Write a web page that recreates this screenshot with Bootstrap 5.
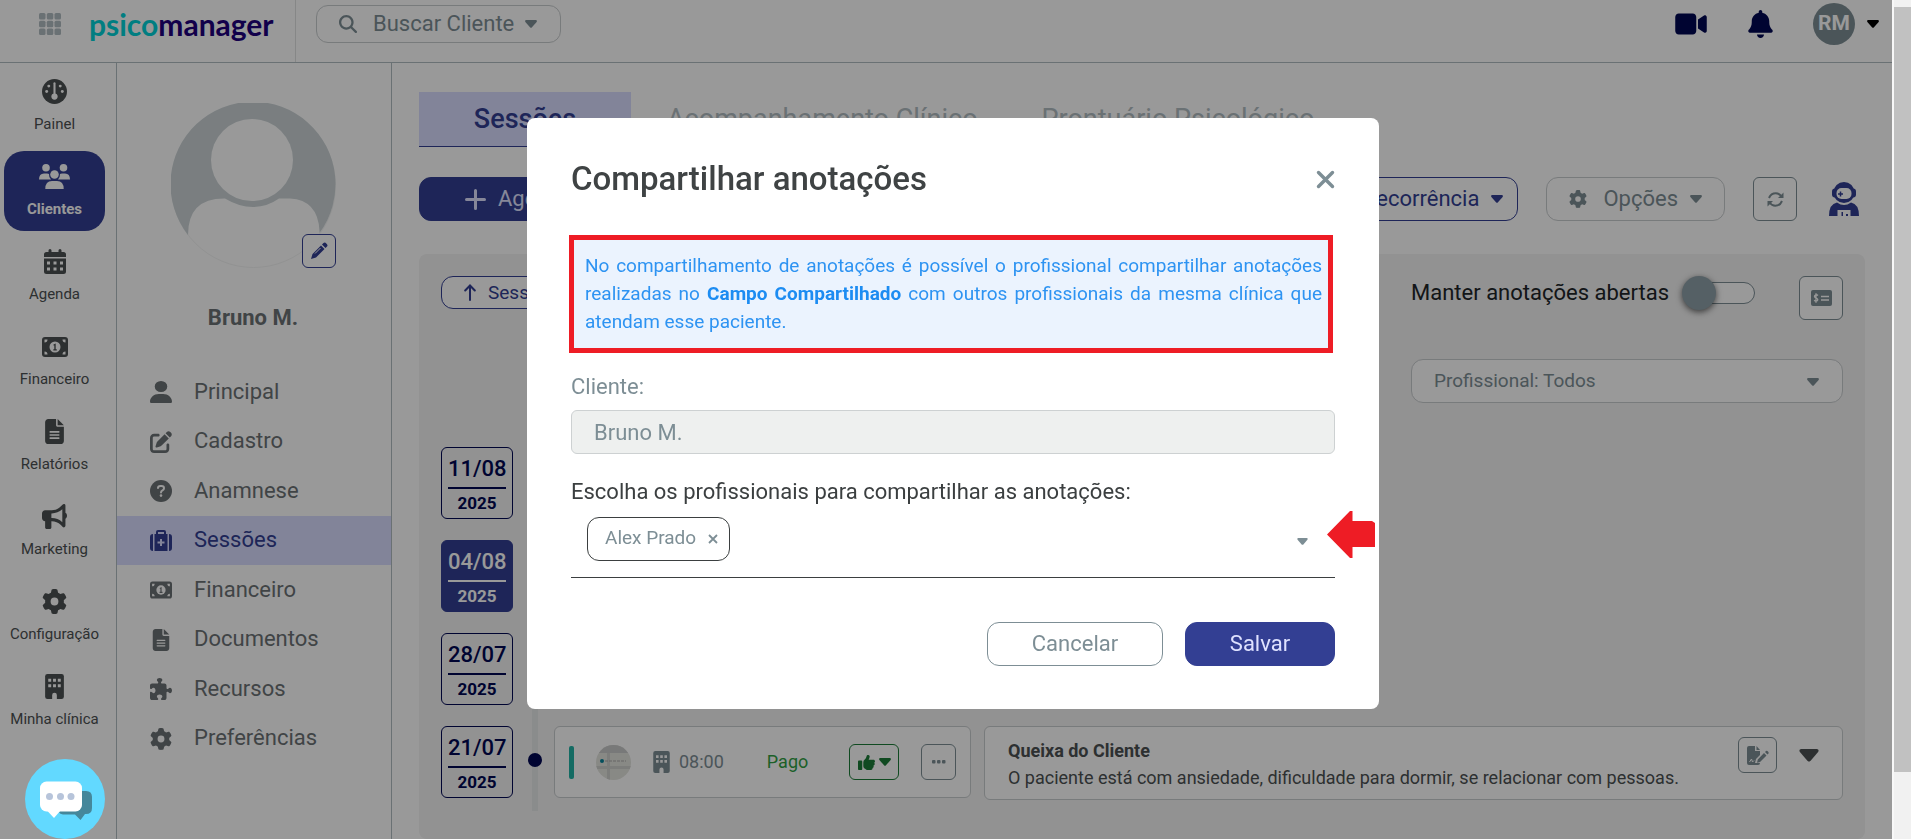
<!DOCTYPE html>
<html lang="pt-BR">
<head>
<meta charset="utf-8">
<meta name="viewport" content="width=device-width, initial-scale=1">
<title>Psicomanager - Sessões</title>
<link href="https://cdn.jsdelivr.net/npm/bootstrap@5.3.0/dist/css/bootstrap.min.css" rel="stylesheet">
<style>
:root{--brand:#333f93;--navy:#000752;--steel:#7d8e95;--slate:#6c7478;--lilac:#d9dcff;--ink:#3b3f40}
body{font-family:Roboto,"Liberation Sans",sans-serif;font-size:22px;line-height:1.2;color:#6c7275;background:#fff}
svg{display:block;fill:currentColor;flex:none}
a{text-decoration:none;color:inherit}
.btn{--bs-btn-font-size:22px;--bs-btn-line-height:26px;--bs-btn-border-radius:12px;--bs-btn-padding-y:8px;--bs-btn-padding-x:22px}
.btn-line{--bs-btn-color:var(--steel);--bs-btn-border-color:var(--steel);background:#fff}
.btn-soft{--bs-btn-color:var(--steel);--bs-btn-border-color:#c9cdcf;background:#fff}
.btn-brand{--bs-btn-color:#dfe2ff;--bs-btn-bg:var(--brand);--bs-btn-border-color:var(--brand)}
.btn-brand-line{--bs-btn-color:var(--brand);--bs-btn-border-color:var(--brand);background:#fff}
.btn-square{--bs-btn-padding-x:0;--bs-btn-padding-y:0;--bs-btn-border-radius:6px;width:44px;height:44px;display:flex;align-items:center;justify-content:center}
.topbar{height:63px;border-bottom:1px solid #b1bcc2;padding-bottom:14px}
.brand-zone{width:296px;height:62px;border-right:1px solid #dfe1e2;padding:0 0 14px 39px;align-self:flex-start}
.wordmark{font:700 30px/36px Lato,sans-serif;color:#1e007d}
.wordmark span{color:#00d2d8}
.search{--bs-btn-padding-y:5px;--bs-btn-line-height:26px;height:38px;margin-left:20px}
.initials{width:42px;height:42px;border-radius:50%;background:#7d8e95;color:#fff;font-size:21px;font-weight:700}
.rail{width:117px;border-right:1px solid #b1bcc2;padding:3px 11px 0 4px;color:#4c5152;font-size:15px;row-gap:5px}
.rail a{height:80px;gap:11px;border-radius:20px;white-space:nowrap}
.rail a.active{background:var(--brand);color:#fff;font-weight:700}
.client{width:275px;border-right:1px solid #b1bcc2;padding-right:2px}
.portrait{width:165px;height:165px;margin-top:40px}
.client-name{margin:37px 0 36px}
.pencil{width:34px;height:34px;right:0;bottom:0}
.client-menu{display:grid;grid-auto-rows:1fr;height:396px;margin-right:-2px}
.client-menu a{padding-left:33px;gap:22px}
.client-menu a.active{background:var(--lilac);color:var(--brand);--cut:#d9dcff}
.workspace{padding:29px 27px 0}
.tabs a{padding:10px 36px 0;height:55px;font-size:27px;line-height:34px;color:#b1bcc2}
.tabs a.active{background:var(--lilac);border-bottom:1px solid var(--brand);color:var(--brand);font-weight:500;width:212px;text-align:center}
.board{background:#f3f3f3;border-radius:8px;padding:22px;margin-top:33px}
.btn-pill{--bs-btn-font-size:19px;--bs-btn-line-height:23px;--bs-btn-padding-y:4px}
.toggle{appearance:none;width:70px;height:22px;border:1px solid var(--steel);border-radius:11px;position:relative;background:#fff}
.toggle::before{content:"";position:absolute;left:-4px;top:-7px;width:34px;height:34px;border-radius:50%;background:#8ea0a8;box-shadow:0 2px 6px rgba(0,0,0,.6)}
.filter{width:432px;height:44px;margin-top:39px}
.filter select{appearance:none;width:100%;height:100%;border:1px solid #c9cdcf;border-radius:12px;background:#fff;color:var(--steel);font-size:19px;padding:0 22px}
.filter svg{right:24px;top:19px}
.date-list{width:72px;gap:21px}
.date-tile{height:72px;border:1px solid var(--navy);border-radius:6px;background:#f3f3f3;color:var(--navy);padding:0 6px;font-weight:500;text-align:center;line-height:28px}
.date-tile b{font-size:17px;display:block;line-height:28px}
.date-tile span{display:block;border-bottom:2px solid;padding:7px 0 4px}
.date-tile.active{background:var(--brand);border-color:var(--brand);color:#fff}
.track-line{width:6px;background:#e6eaea;margin:0 16px 0 19px}
.track-line i{width:14px;height:14px;border-radius:50%;background:var(--navy);left:-4px;bottom:44px}
.entry{border:1px solid #c9cdcf;border-radius:6px;background:#fff;font-size:18px}
.entry-time{width:417px;height:72px;padding:0 14px}
.entry-note{height:74px;color:#4c5152;padding:10px 23px 0}
.entry-note p{line-height:27px}
.entry-mark{width:5px;height:33px;border-radius:2px;background:#22b3a6}
.btn-mini{--bs-btn-padding-x:0;--bs-btn-padding-y:0;--bs-btn-border-radius:6px;height:36px;display:flex;align-items:center;justify-content:center}
.shade{position:fixed;inset:0 19px 0 0;background:rgba(0,0,0,.4);z-index:1040}
.scroll-rail{width:19px;background:#f1f1f1;border-left:2px solid #f8f8f8;padding-top:7px}
.scroll-rail div{height:92%;background:#c1c1c1}
.chat{left:25px;bottom:0;width:80px;height:80px;z-index:1060}
.modal{width:calc(100% - 5px)}
.modal-dialog{max-width:852px;margin:118px auto 0}
.modal-content{border:0;border-radius:8px;padding:42px 44px 43px}
.modal h1{font-size:33px;line-height:38px;font-weight:500;color:#3f4344}
.notice{border:5px solid #ee1c25;background:#ebf3fe;color:#2d93f2;font-size:19px;line-height:28px;text-align:justify;padding:12px 6px 12px 11px;margin:37px 2px 21px -2px}
.notice b{color:#1c8cf2}
.modal .form-control{height:44px;font-size:22px;padding:0 22px;border-radius:6px;border-color:#cdd1d2;background:#eef0ef;color:var(--steel)}
.picker{height:61px;border-bottom:1px solid #3b3f40;padding:0 27px 0 16px}
.chip{height:44px;border:1px solid #3b3f40;border-radius:12px;color:var(--steel);font-size:19px;padding:0 11px 0 17px;gap:12px}
.chip button,.plain{border:0;background:none;padding:0;color:inherit}
.picker input{border:0;outline:0;min-width:0;height:44px}
.pointer{left:800px;top:393px}
</style>
</head>
<body>
<svg width="0" height="0" class="position-absolute" aria-hidden="true">
<defs>
<symbol id="caret" viewBox="0 0 12 8"><path d="M1.200 0H10.800Q12.500.3 11.600 1.900L7 7.300Q6 8.300 5 7.300L.4 1.900Q-.5.3 1.200 0Z"/></symbol>
<symbol id="gear" viewBox="0 0 512 512"><path d="M495.900 166.600c3.200 8.700 .5 18.400-6.400 24.600l-43.300 39.400c1.100 8.300 1.700 16.800 1.700 25.400s-.6 17.100-1.700 25.400l43.300 39.400c6.900 6.200 9.600 15.900 6.400 24.600c-4.400 11.900-9.700 23.300-15.800 34.300l-4.700 8.100c-6.600 11-14 21.400-22.100 31.200c-5.900 7.200-15.700 9.600-24.500 6.800l-55.700-17.700c-13.400 10.300-28.200 18.900-44 25.400l-12.500 57.100c-2 9.100-9 16.300-18.200 17.800c-13.800 2.300-28 3.500-42.500 3.500s-28.700-1.200-42.500-3.500c-9.200-1.500-16.200-8.700-18.200-17.800l-12.500-57.100c-15.800-6.500-30.600-15.100-44-25.400L83.100 425.900c-8.800 2.800-18.600 .3-24.500-6.800c-8.100-9.800-15.500-20.200-22.100-31.200l-4.700-8.100c-6.100-11-11.400-22.400-15.800-34.300c-3.200-8.700-.5-18.400 6.400-24.600l43.300-39.400C64.600 273.100 64 264.600 64 256s.6-17.100 1.700-25.400L22.400 191.200c-6.900-6.200-9.600-15.900-6.400-24.600c4.400-11.900 9.700-23.300 15.800-34.300l4.700-8.100c6.600-11 14-21.400 22.100-31.200c5.900-7.200 15.700-9.600 24.500-6.800l55.700 17.700c13.400-10.300 28.200-18.900 44-25.400l12.500-57.100c2-9.100 9-16.300 18.200-17.800C227.300 1.200 241.500 0 256 0s28.700 1.200 42.500 3.500c9.200 1.500 16.200 8.700 18.200 17.800l12.500 57.100c15.800 6.500 30.600 15.100 44 25.400l55.700-17.700c8.800-2.800 18.600-.3 24.500 6.800c8.100 9.800 15.500 20.200 22.100 31.200l4.700 8.100c6.100 11 11.400 22.400 15.800 34.300zM256 336a80 80 0 1 0 0-160 80 80 0 1 0 0 160z"/></symbol>
<symbol id="money" viewBox="0 0 26 20"><rect width="26" height="20" rx="3"/><g fill="var(--cut,#fff)"><circle cx="13" cy="10" r="5.500"/><path d="M2.500 5.500V2.500H5.500A3 3 0 0 1 2.500 5.500ZM23.500 5.500V2.500H20.500A3 3 0 0 0 23.500 5.500ZM2.500 14.500V17.500H5.500A3 3 0 0 0 2.500 14.500ZM23.500 14.500V17.500H20.500A3 3 0 0 1 23.500 14.500Z"/></g><path d="M11.500 7.600 13.700 6.500V12.200H14.800V13.400H11.300V12.200H12.300V8.400L11.500 8.600Z"/></symbol>
<symbol id="file" viewBox="0 0 384 512"><path d="M64 0C28.700 0 0 28.700 0 64V448c0 35.300 28.700 64 64 64H320c35.300 0 64-28.700 64-64V160H256c-17.700 0-32-14.300-32-32V0H64zM256 0V128H384L256 0z"/><path d="M104 264H280M104 328H280M104 392H280" stroke="var(--cut,#fff)" stroke-width="32" stroke-linecap="round"/></symbol>
<symbol id="building" viewBox="0 0 384 512"><rect width="384" height="512" rx="48"/><path d="M144 512V432a48 48 0 0 1 96 0v80ZM64 96h60v64H64ZM162 96h60v64h-60ZM260 96h60v64h-60ZM64 208h60v64H64ZM162 208h60v64h-60ZM260 208h60v64h-60Z" fill="var(--cut,#fff)"/></symbol>
</defs>
</svg>

<div class="d-flex vh-100 overflow-hidden">
  <div class="flex-grow-1 d-flex flex-column overflow-hidden">
    <header class="topbar d-flex align-items-center flex-shrink-0">
      <div class="brand-zone d-flex align-items-center">
        <button class="plain" aria-label="Aplicativos"><svg width="22" height="22" viewBox="0 0 22 22" color="#b1bcc2"><g id="dots"><rect width="6.500" height="6.500" rx="1.500"/><rect x="7.800" width="6.500" height="6.500" rx="1.500"/><rect x="15.500" width="6.500" height="6.500" rx="1.500"/></g><use href="#dots" y="7.800"/><use href="#dots" y="15.500"/></svg></button>
        <a href="#" class="wordmark ms-4 ps-1"><span>psico</span>manager</a>
      </div>
      <button class="btn btn-soft search d-flex align-items-center">
        <svg width="18" height="18" viewBox="0 0 512 512" class="me-3"><path d="M416 208c0 45.900-14.900 88.300-40 122.700L502.600 457.400c12.500 12.500 12.500 32.800 0 45.300s-32.800 12.500-45.300 0L330.700 376c-34.400 25.200-76.800 40-122.700 40C93.100 416 0 322.900 0 208S93.100 0 208 0S416 93.100 416 208zM208 352a144 144 0 1 0 0-288 144 144 0 1 0 0 288z"/></svg>
        Buscar Cliente <svg width="12" height="8" style="margin:0 1px 0 11px"><use href="#caret"/></svg>
      </button>
      <div class="ms-auto d-flex align-items-center" style="color:var(--navy);margin-right:13px">
        <a href="#" aria-label="Vídeo"><svg width="32" height="28" viewBox="0 0 576 512"><path d="M0 128C0 92.700 28.700 64 64 64H320c35.300 0 64 28.700 64 64V384c0 35.300-28.700 64-64 64H64c-35.300 0-64-28.700-64-64V128zM559.100 99.800c10.400 5.600 16.900 16.400 16.900 28.200V384c0 11.800-6.500 22.600-16.900 28.200s-23 5-32.900-1.600l-96-64L416 337.100V320 192 174.900l14.200-9.500 96-64c9.800-6.500 22.400-7.200 32.900-1.600z"/></svg></a>
        <a href="#" aria-label="Notificações" style="margin:0 40px 0 41px"><svg width="25" height="28" viewBox="0 0 448 512"><path d="M224 0c-17.700 0-32 14.300-32 32V51.200C119 66 64 130.600 64 208v18.800c0 47-17.300 92.400-48.500 127.600l-7.400 8.300c-8.400 9.400-10.400 22.900-5.300 34.400S19.400 416 32 416H416c12.600 0 24-7.400 29.200-18.900s3.100-25-5.300-34.400l-7.400-8.300C401.300 319.200 384 273.900 384 226.800V208c0-77.400-55-142-128-156.800V32c0-17.700-14.300-32-32-32zm45.300 493.300c12-12 18.700-28.300 18.700-45.300H224 160c0 17 6.700 33.300 18.700 45.300s28.300 18.700 45.300 18.700s33.300-6.700 45.300-18.700z"/></svg></a>
        <button class="plain d-flex align-items-center gap-2 text-black"><span class="initials d-flex align-items-center justify-content-center me-1">RM</span><svg width="12" height="8"><use href="#caret"/></svg></button>
      </div>
    </header>

    <div class="d-flex flex-grow-1">
      <nav class="rail d-flex flex-column flex-shrink-0">
        <a href="#" class="d-flex flex-column align-items-center justify-content-center"><svg width="25" height="25" viewBox="0 0 24 24"><circle cx="12" cy="12" r="12"/><g fill="#fff"><circle cx="4.500" cy="12" r="1.400"/><circle cx="6.500" cy="6.800" r="1.400"/><circle cx="17.500" cy="6.800" r="1.400"/><circle cx="19.500" cy="12" r="1.400"/><circle cx="12" cy="16.800" r="3"/><rect x="11" y="3" width="2" height="13" rx="1"/></g></svg>Painel</a>
        <a href="#" class="active d-flex flex-column align-items-center justify-content-center"><svg width="31" height="25" viewBox="0 0 31 25"><circle cx="7" cy="3.800" r="3.800"/><circle cx="24.500" cy="3.800" r="3.800"/><circle cx="15.500" cy="10.500" r="4.300"/><path d="M0 15.500Q0 9.500 5 9.500H8Q9.500 9.500 10 10 9.800 13.500 12 15.500ZM31 15.500Q31 9.500 26 9.500H23Q21.500 9.500 21 10 21.200 13.500 19 15.500ZM6.300 25Q6.300 17 13 17H18Q24.700 17 24.700 25Z"/></svg>Clientes</a>
        <a href="#" class="d-flex flex-column align-items-center justify-content-center"><svg width="22" height="25" viewBox="0 0 22 25"><path d="M0 8V5.500Q0 3 2.500 3H4.500V1.500a1.500 1.500 0 0 1 3 0V3h7V1.500a1.500 1.500 0 0 1 3 0V3h2Q22 3 22 5.500V8ZM0 9.500H22V22.500Q22 25 19.500 25H2.500Q0 25 0 22.500Z"/><path d="M3 12.500h3v3H3ZM9.500 12.500h3v3h-3ZM16 12.500h3v3h-3ZM3 18.500h3v3H3ZM9.500 18.500h3v3h-3ZM16 18.500h3v3h-3Z" fill="#fff"/></svg>Agenda</a>
        <a href="#" class="d-flex flex-column align-items-center justify-content-center"><svg width="28" height="25"><use href="#money" y="3" width="28" height="20"/></svg>Financeiro</a>
        <a href="#" class="d-flex flex-column align-items-center justify-content-center"><svg width="19" height="25"><use href="#file"/></svg>Relatórios</a>
        <a href="#" class="d-flex flex-column align-items-center justify-content-center"><svg width="25" height="25" viewBox="0 0 512 512"><path d="M480 32c0-12.900-7.800-24.600-19.800-29.600s-25.700-2.200-34.900 6.900L381.700 53c-48 48-113.100 75-181 75H192 160 64c-35.300 0-64 28.700-64 64v96c0 35.300 28.700 64 64 64l0 128c0 17.700 14.300 32 32 32h64c17.700 0 32-14.300 32-32V352l8.700 0c67.900 0 133 27 181 75l43.600 43.600c9.200 9.200 22.900 11.900 34.900 6.900s19.800-16.600 19.800-29.600V300.400c18.600-8.800 32-32.500 32-60.400s-13.400-51.600-32-60.400V32zm-64 76.700V240 371.300C357.200 317.800 280.500 288 200.700 288H192V192h8.700c79.800 0 156.500-29.800 215.300-83.300z"/></svg>Marketing</a>
        <a href="#" class="d-flex flex-column align-items-center justify-content-center"><svg width="25" height="25"><use href="#gear"/></svg>Configuração</a>
        <a href="#" class="d-flex flex-column align-items-center justify-content-center"><svg width="19" height="25"><use href="#building"/></svg>Minha clínica</a>
      </nav>

      <aside class="client flex-shrink-0">
        <div class="portrait position-relative mx-auto">
          <svg width="165" height="165" viewBox="0 0 165 165"><circle cx="82.500" cy="82.500" r="82" fill="#fff" stroke="#f3f4f4"/><path d="M17 132A82.500 82.500 0 1 1 148.500 130V128Q147 97 119 95.500H108Q96 104 82 104T54 95.500Q17 95 17 132Z" fill="#cbd3d6"/><circle cx="81" cy="57" r="41" fill="#fff"/></svg>
          <button class="btn btn-brand-line btn-square pencil position-absolute" aria-label="Editar foto"><svg width="18" height="18" viewBox="0 0 18 18"><path d="M11 3.500 14.500 7 6 15.500 1 17 2.500 12ZM12 2.500 13.500 1Q15 0 16.300 1.500L17 2.200Q18 3.500 17 4.500L15.500 6Z"/><path d="M10.500 6 5 11.500" stroke="#fff" stroke-width="1"/></svg></button>
        </div>
        <div class="client-name fw-bold text-center">Bruno M.</div>
        <nav class="client-menu">
          <a href="#" class="d-flex align-items-center"><svg width="22" height="22" viewBox="0 0 448 512" preserveAspectRatio="none"><path d="M224 256A128 128 0 1 0 224 0a128 128 0 1 0 0 256zm-45.700 48C79.800 304 0 383.800 0 482.300C0 498.700 13.300 512 29.700 512H418.300c16.400 0 29.700-13.300 29.700-29.700C448 383.800 368.200 304 269.700 304H178.300z"/></svg>Principal</a>
          <a href="#" class="d-flex align-items-center"><svg width="22" height="22" viewBox="0 0 512 512"><path d="M471.600 21.700c-21.900-21.900-57.300-21.900-79.200 0L362.300 51.700l97.900 97.900 30.100-30.100c21.900-21.900 21.900-57.300 0-79.200L471.600 21.700zm-299.200 220c-6.100 6.100-10.800 13.600-13.500 21.900l-29.600 88.800c-2.900 8.600-.6 18.100 5.800 24.600s15.900 8.700 24.600 5.800l88.800-29.600c8.200-2.700 15.700-7.400 21.900-13.500L437.700 172.300 339.700 74.300 172.400 241.700zM96 64C43 64 0 107 0 160V416c0 53 43 96 96 96H352c53 0 96-43 96-96V320c0-17.700-14.300-32-32-32s-32 14.300-32 32v96c0 17.700-14.300 32-32 32H96c-17.700 0-32-14.300-32-32V160c0-17.700 14.300-32 32-32h96c17.700 0 32-14.300 32-32s-14.300-32-32-32H96z"/></svg>Cadastro</a>
          <a href="#" class="d-flex align-items-center"><svg width="22" height="22" viewBox="0 0 22 22"><circle cx="11" cy="11" r="11"/><path d="M8 8Q8 6 10.500 6H11.500Q14 6 14 8.300 14 9.600 12.500 10.400 11 11.200 11 12.500" fill="none" stroke="#fff" stroke-width="2" stroke-linecap="round"/><circle cx="11" cy="15.600" r="1.300" fill="#fff"/></svg>Anamnese</a>
          <a href="#" class="active d-flex align-items-center"><svg width="22" height="22" viewBox="0 0 22 22"><path d="M0 7Q0 4 3 4V21Q0 21 0 18ZM22 7Q22 4 19 4V21Q22 21 22 18ZM4.500 4H6V2Q6 0 8 0H14Q16 0 16 2V4H17.500V21H4.500Z"/><path d="M8 2H14V4H8ZM10 9H12V11.500H14.500V13.500H12V16H10V13.500H7.500V11.500H10Z" fill="#d9dcff"/></svg>Sessões</a>
          <a href="#" class="d-flex align-items-center"><svg width="22" height="22"><use href="#money"/></svg>Financeiro</a>
          <a href="#" class="d-flex align-items-center"><svg width="22" height="22"><use href="#file"/></svg>Documentos</a>
          <a href="#" class="d-flex align-items-center"><svg width="22" height="22" viewBox="0 0 512 512"><path d="M192 104.800c0-9.200-5.800-17.300-13.200-22.800C167.200 73.300 160 61.300 160 48c0-26.500 28.700-48 64-48s64 21.500 64 48c0 13.300-7.200 25.300-18.800 34c-7.400 5.500-13.200 13.600-13.200 22.800v0c0 12.800 10.400 23.200 23.200 23.200H336c26.500 0 48 21.500 48 48v56.800c0 12.800 10.400 23.200 23.200 23.200v0c9.200 0 17.300-5.800 22.800-13.200c8.700-11.600 20.700-18.800 34-18.800c26.500 0 48 28.700 48 64s-21.500 64-48 64c-13.300 0-25.300-7.200-34-18.800c-5.500-7.400-13.600-13.200-22.800-13.200v0c-12.800 0-23.200 10.400-23.200 23.200V464c0 26.500-21.500 48-48 48H279.200c-12.800 0-23.200-10.400-23.200-23.200v0c0-9.200 5.800-17.300 13.200-22.800c11.600-8.700 18.800-20.700 18.800-34c0-26.500-28.700-48-64-48s-64 21.500-64 48c0 13.300 7.200 25.300 18.800 34c7.400 5.500 13.200 13.600 13.200 22.800v0c0 12.800-10.400 23.200-23.200 23.200H48c-26.500 0-48-21.500-48-48V343.200C0 330.400 10.400 320 23.200 320v0c9.200 0 17.300 5.800 22.800 13.200C54.700 344.800 66.700 352 80 352c26.500 0 48-28.700 48-64s-21.500-64-48-64c-13.300 0-25.300 7.200-34 18.800C40.500 250.200 32.400 256 23.200 256v0C10.400 256 0 245.600 0 232.800V176c0-26.500 21.500-48 48-48H168.800c12.800 0 23.200-10.400 23.200-23.200v0z"/></svg>Recursos</a>
          <a href="#" class="d-flex align-items-center"><svg width="22" height="22"><use href="#gear"/></svg>Preferências</a>
        </nav>
      </aside>

      <main class="workspace flex-grow-1 d-flex flex-column">
        <nav class="tabs d-flex"><a href="#" class="active">Sessões</a><a href="#">Acompanhamento Clínico</a><a href="#" style="padding-left:28px">Prontuário Psicológico</a></nav>
        <div class="d-flex align-items-center" style="margin-top:30px;gap:28px">
          <button class="btn btn-brand d-flex align-items-center" style="--bs-btn-padding-x:45px"><svg width="21" height="21" viewBox="0 0 21 21" style="margin-right:12px"><path d="M10.500 1.500V19.500M1.500 10.500H19.500" stroke="currentColor" stroke-width="3" stroke-linecap="round"/></svg>Agendar</button>
          <button class="btn btn-brand-line d-flex align-items-center ms-auto" style="--bs-btn-padding-x:14px">Agendar recorrência <svg width="12" height="8" style="margin-left:12px"><use href="#caret"/></svg></button>
          <button class="btn btn-soft d-flex align-items-center"><svg width="18" height="20" class="me-3"><use href="#gear"/></svg>Opções <svg width="12" height="8" style="margin-left:12px"><use href="#caret"/></svg></button>
          <button class="btn btn-line btn-square" aria-label="Atualizar"><svg width="17" height="15" viewBox="0 0 17 15"><path d="M2 6Q4 1.200 8.800 1.200 12 1.200 14.600 4.500M15 9Q13 13.800 8.200 13.800 5 13.800 2.400 10.500" fill="none" stroke="currentColor" stroke-width="2"/><path d="M16.500.5V6H11ZM.5 14.500V9H6Z"/></svg></button>
          <a href="#" aria-label="Assistente" style="color:var(--brand);margin:0 6px 0 4px"><svg width="30" height="34" viewBox="0 0 30 34"><circle cx="15" cy="10.500" r="10.500"/><rect x="3" y="6.500" width="24" height="9" rx="3"/><rect x="7.500" y="6" width="15" height="11" rx="5" fill="#fff"/><path d="M11.500 9.500v5M9 12h5" stroke="currentColor" stroke-width="1.500"/><path d="M0 34Q0 22 8 20.500 15 25.500 22 20.500 30 22 30 34Z"/><path d="M8.500 34V28H21.500V34H19V32H17V34H14V30H12.500V34Z" fill="#fff"/></svg></a>
        </div>
        <section class="board flex-grow-1 d-flex flex-column">
          <div class="d-flex align-items-start justify-content-between">
            <button class="btn btn-brand-line btn-pill d-flex align-items-center"><svg width="12" height="17" viewBox="0 0 12 17" style="margin-right:12px"><path d="M6 16V2M1.200 6.500 6 1.500 10.800 6.500" fill="none" stroke="currentColor" stroke-width="2" stroke-linecap="round"/></svg>Sessões</button>
            <div class="d-flex align-items-start">
              <label for="keep" class="text-dark mt-1">Manter anotações abertas</label>
              <input type="checkbox" role="switch" id="keep" class="toggle" style="margin:6px 44px 0 16px">
              <button class="btn btn-line btn-square" aria-label="Recibo"><svg width="21" height="16" viewBox="0 0 21 16"><rect width="21" height="16" rx="2"/><path d="M10 6.500H18M10 10H18M7 5.500Q6 4.500 4.800 4.800 3.300 5.200 3.500 6.500 3.800 7.500 5.200 8 6.800 8.600 6.800 9.800 6.600 11 5 11 3.900 11 3.200 10.200M5 3.300V12.700" fill="none" stroke="#fff" stroke-width="1.300"/></svg></button>
            </div>
          </div>
          <div class="filter position-relative ms-auto"><select aria-label="Profissional"><option>Profissional: Todos</option></select><svg width="12" height="8" class="position-absolute" style="color:var(--steel)"><use href="#caret"/></svg></div>
          <div class="d-flex" style="margin-top:44px">
            <div class="date-list d-flex flex-column">
              <div class="date-tile"><span>11/08</span><b>2025</b></div>
              <div class="date-tile active"><span>04/08</span><b>2025</b></div>
              <div class="date-tile"><span>28/07</span><b>2025</b></div>
              <div class="date-tile"><span>21/07</span><b>2025</b></div>
            </div>
            <div class="track-line position-relative" style="margin-bottom:-13px"><i class="position-absolute"></i></div>
            <div class="d-flex align-items-end flex-grow-1" style="gap:13px">
              <article class="entry entry-time d-flex align-items-center">
                <span class="entry-mark"></span>
                <svg width="35" height="35" viewBox="0 0 35 35" style="margin:0 22px"><defs><clipPath id="round"><circle cx="17.500" cy="17.500" r="17.500"/></clipPath></defs><g clip-path="url(#round)"><rect width="35" height="35" fill="#e3e4de"/><rect width="35" height="8" fill="#c9caca"/><path d="M0 22.500H35M12.500 8V35" stroke="#cfd0cd" stroke-width="3"/><circle cx="6" cy="16" r="2" fill="#088299"/><path d="M9 16H30" stroke="#aaa" stroke-width="1" stroke-dasharray="3 1"/></g></svg>
                <svg width="17" height="22" color="#7d8e95" style="margin-right:9px"><use href="#building"/></svg>
                <span style="color:var(--steel)">08:00</span>
                <span style="color:#30a044;margin-left:43px">Pago</span>
                <div class="d-flex ms-auto" style="gap:22px">
                  <button class="btn btn-mini gap-1" aria-label="Confirmar" style="width:50px;--bs-btn-border-color:#1c7c37;--bs-btn-color:#1c7c37"><svg width="17" height="17" viewBox="0 0 512 512"><path d="M313.400 32.900c26 5.200 42.900 30.500 37.700 56.500l-2.300 11.400c-5.300 26.700-15.100 52.100-28.800 75.200H464c26.500 0 48 21.500 48 48c0 18.500-10.500 34.600-25.900 42.600C497 275.400 504 288.900 504 304c0 23.400-16.800 42.900-38.900 47.100c4.400 7.300 6.900 15.800 6.900 24.900c0 21.300-13.900 39.400-33.100 45.600c.7 3.300 1.100 6.800 1.100 10.400c0 26.500-21.500 48-48 48H294.500c-19 0-37.500-5.600-53.300-16.100l-38.500-25.700C176 420.400 160 390.400 160 358.300V320 272 247.100c0-29.200 13.300-56.700 36-75l7.400-5.900c26.500-21.200 44.600-51 51.200-84.200l2.300-11.400c5.200-26 30.500-42.900 56.500-37.700zM32 192H96c17.700 0 32 14.300 32 32V448c0 17.700-14.300 32-32 32H32c-17.700 0-32-14.300-32-32V224c0-17.700 14.300-32 32-32z"/></svg><svg width="12" height="8"><use href="#caret"/></svg></button>
                  <button class="btn btn-line btn-mini" aria-label="Mais" style="width:35px"><svg width="14" height="4"><rect width="3.500" height="3.500" rx="1"/><rect x="5" width="3.500" height="3.500" rx="1"/><rect x="10" width="3.500" height="3.500" rx="1"/></svg></button>
                </div>
              </article>
              <article class="entry entry-note flex-grow-1 d-flex justify-content-between" style="margin-bottom:-2px">
                <div><p class="fw-bold m-0">Queixa do Cliente</p><p class="m-0">O paciente está com ansiedade, dificuldade para dormir, se relacionar com pessoas.</p></div>
                <div class="d-flex align-items-center align-self-start" style="gap:22px">
                  <button class="btn btn-line btn-mini" aria-label="Editar anotação" style="width:39px"><svg width="22" height="19" viewBox="0 0 22 19"><path d="M0 2Q0 0 2 0H8V5H13V9L9 13 8 17H13Q13 19 11 19H2Q0 19 0 17ZM9.500 0 13 4H9.500ZM17 7 19.500 9.500 13 16 10 16.800 10.800 13.500ZM18 6 19 5Q20 4.500 21 5.500T21.500 7.500L20.500 8.500Z"/><path d="M2.500 16 4.500 13 5.500 16 7 14.500" fill="none" stroke="#fff" stroke-width="1"/></svg></button>
                  <button class="plain" aria-label="Expandir"><svg width="20" height="13"><use href="#caret"/></svg></button>
                </div>
              </article>
            </div>
          </div>
        </section>
      </main>
    </div>
  </div>
  <div class="scroll-rail flex-shrink-0" aria-hidden="true"><div></div></div>
</div>

<div class="shade"></div>

<div class="modal d-block" role="dialog" aria-modal="true" aria-labelledby="share-title">
  <div class="modal-dialog">
    <div class="modal-content">
      <div class="d-flex justify-content-between align-items-center">
        <h1 class="m-0" id="share-title">Compartilhar anotações</h1>
        <button class="plain" aria-label="Fechar" style="color:var(--steel)"><svg width="19" height="19" viewBox="0 0 19 19"><path d="M2.500 2.500 16.500 16.500M16.500 2.500 2.500 16.500" stroke="currentColor" stroke-width="3.400" stroke-linecap="round"/></svg></button>
      </div>
      <div class="notice">No compartilhamento de anotações é possível o profissional compartilhar anotações realizadas no <b>Campo Compartilhado</b> com outros profissionais da mesma clínica que atendam esse paciente.</div>
      <label for="who" style="color:var(--steel);margin-bottom:10px">Cliente:</label>
      <input id="who" class="form-control" value="Bruno M." disabled>
      <label for="pros" style="color:var(--ink);margin:25px 0 11px">Escolha os profissionais para compartilhar as anotações:</label>
      <div class="picker d-flex align-items-start">
        <span class="chip d-flex align-items-center">Alex Prado<button aria-label="Remover"><svg width="10" height="10" viewBox="0 0 10 10"><path d="M1 1 9 9M9 1 1 9" stroke="currentColor" stroke-width="1.800"/></svg></button></span>
        <input id="pros" type="text" class="flex-grow-1">
        <button class="plain pt-3" aria-label="Abrir lista" style="color:var(--steel)"><svg width="11" height="17"><use href="#caret" width="11" height="7" y="5"/></svg></button>
      </div>
      <div class="d-flex justify-content-end" style="gap:22px;margin-top:44px">
        <button class="btn btn-line" style="width:176px">Cancelar</button>
        <button class="btn btn-brand" style="width:150px">Salvar</button>
      </div>
      <svg class="pointer position-absolute" width="48" height="48" viewBox="0 0 48 48" color="#ee1c25"><path d="M0 23.500 23 0H25.500V10H45L48 12V36H25.500V47H23Z"/></svg>
    </div>
  </div>
</div>

<button class="plain chat position-fixed" aria-label="Chat"><svg width="80" height="80" viewBox="0 0 80 80"><circle cx="40" cy="40" r="40" fill="#62d9ff"/><path d="M40 32H61Q67 32 67 38V49Q67 55 61 55H60L55.500 61 50 55.500H38Q34 55 34 52Z" fill="#45879b"/><rect x="15" y="22.500" width="42" height="30" rx="6.500" fill="#fff"/><path d="M21.500 51H36L29 59Z" fill="#fff"/><g fill="#b7c4da"><circle cx="24.500" cy="37.500" r="3.500"/><circle cx="35.500" cy="37.500" r="3.500"/><circle cx="46" cy="37.500" r="3.500"/></g></svg></button>
<script src="https://cdn.jsdelivr.net/npm/bootstrap@5.3.0/dist/js/bootstrap.bundle.min.js"></script>
</body>
</html>
